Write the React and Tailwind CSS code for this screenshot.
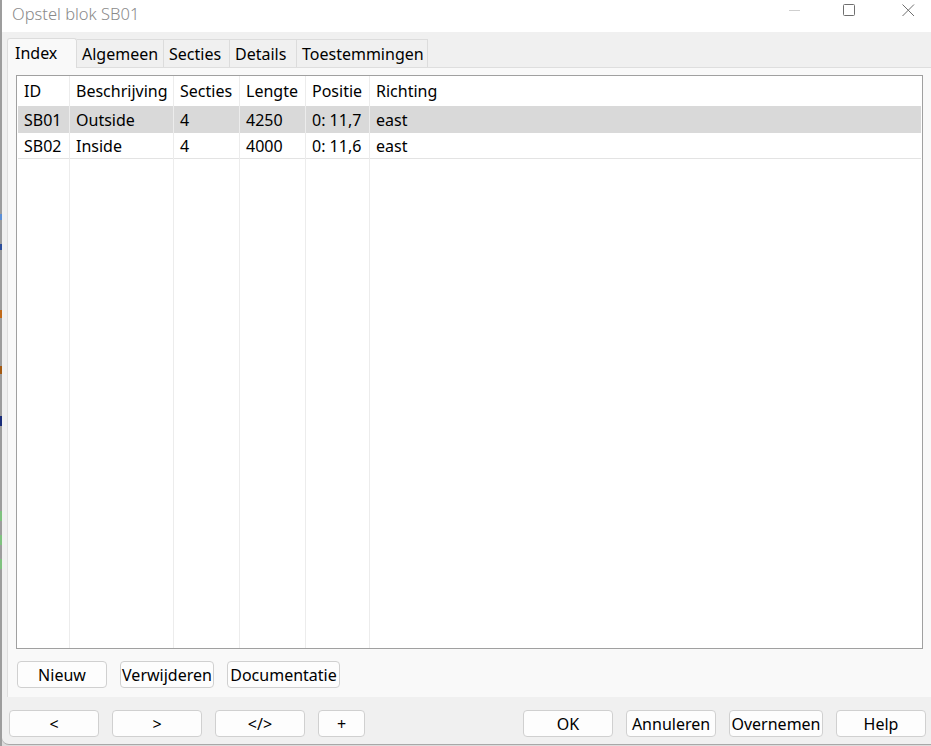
import React from "react";

const font = { fontFamily: '"Noto Sans", "Open Sans", sans-serif' };

const columns = [
  { key: "id", label: "ID", w: "w-[52px]" },
  { key: "desc", label: "Beschrijving", w: "w-[104px]" },
  { key: "sec", label: "Secties", w: "w-[66px]" },
  { key: "len", label: "Lengte", w: "w-[66px]" },
  { key: "pos", label: "Positie", w: "w-[64px]" },
  { key: "dir", label: "Richting", w: "flex-1" },
];

const rows = [
  { id: "SB01", desc: "Outside", sec: "4", len: "4250", pos: "0: 11,7", dir: "east", sel: true },
  { id: "SB02", desc: "Inside", sec: "4", len: "4000", pos: "0: 11,6", dir: "east", sel: false },
];

function Btn({ w, children }) {
  return (
    <div
      className={`${w} h-[27px] shrink-0 flex items-center justify-center rounded-[4px] border border-[#d0d0d0] bg-[#fdfdfd] text-[16px] text-black whitespace-nowrap`}
    >
      {children}
    </div>
  );
}

function Tab({ w, label, selected }) {
  if (selected) {
    return (
      <div
        className={`${w} h-[30px] shrink-0 flex items-center pl-[7px] pb-[2px] bg-[#f9f9f9] border border-b-0 border-[#dcdcdc] rounded-t-[3px] text-[16px] text-black relative z-10 mb-[-1px]`}
      >
        {label}
      </div>
    );
  }
  return (
    <div
      className={`${w} h-[28px] shrink-0 flex items-center pl-[5px] bg-[#f0f0f0] border border-b-0 border-l-0 border-[#dcdcdc] text-[16px] text-black`}
    >
      {label}
    </div>
  );
}

export default function App() {
  return (
    <div className="w-[931px] h-[746px] overflow-hidden flex bg-[#dcdcdc]" style={font}>
      {/* background window peek */}
      <div className="w-[2px] h-full flex flex-col bg-[#9d9d9d]">
        <div className="h-[214px]" />
        <div className="h-[6px] bg-[#5b8fd6]" />
        <div className="h-[24px]" />
        <div className="h-[6px] bg-[#2b4d9a]" />
        <div className="h-[60px]" />
        <div className="h-[8px] bg-[#c06a1a]" />
        <div className="h-[48px]" />
        <div className="h-[8px] bg-[#a45a12]" />
        <div className="h-[42px]" />
        <div className="h-[10px] bg-[#1a2d7a]" />
        <div className="h-[85px]" />
        <div className="h-[10px] bg-[#7fc27f]" />
        <div className="h-[14px]" />
        <div className="h-[10px] bg-[#7fc27f]" />
        <div className="h-[14px]" />
        <div className="h-[10px] bg-[#7fc27f]" />
      </div>

      {/* window */}
      <div className="flex-1 h-[745px] flex flex-col rounded-bl-[7px] overflow-hidden border-b border-[#a8a8a8] bg-[#f0f0f0]">
        {/* title bar */}
        <div className="h-[32px] shrink-0 bg-white flex items-center relative">
          <div className="pl-[10px] text-[16.5px] text-[#8a8a8a] font-light pb-[4px]">Opstel blok SB01</div>
          <div className="flex-1" />
          <div className="w-[11px] h-[1px] bg-[#cfcfcf] mb-[12px]" />
          <div className="w-[43px]" />
          <svg width="13" height="13" viewBox="0 0 13 13" className="mb-[12px]">
            <rect x="0.5" y="0.5" width="11" height="11" rx="1" fill="none" stroke="#6f6f6f" strokeWidth="1" />
          </svg>
          <div className="w-[46px]" />
          <svg width="13" height="13" viewBox="0 0 13 13" className="mb-[12px] mr-[16px]">
            <path d="M0.5 0.5 L12 12 M12 0.5 L0.5 12" stroke="#6f6f6f" strokeWidth="1" fill="none" />
          </svg>
        </div>

        {/* body */}
        <div className="flex-1 flex flex-col pt-[5px]">
          {/* tabs */}
          <div className="flex items-end pl-[5px] h-[30px]">
            <Tab w="w-[70px]" label="Index" selected />
            <Tab w="w-[87px]" label="Algemeen" />
            <Tab w="w-[66px]" label="Secties" />
            <Tab w="w-[67px]" label="Details" />
            <Tab w="w-[131px]" label="Toestemmingen" />
          </div>

          {/* tab page */}
          <div className="ml-[5px] h-[630px] flex flex-col bg-[#f9f9f9] border-l border-t border-[#dedede] pl-[8px] pr-[8px] pt-[7px]">
            {/* list */}
            <div className="h-[574px] border border-[#a0a0a0] bg-white flex px-[1px]">
              {columns.map((c, ci) => (
                <div
                  key={c.key}
                  className={`${c.w} flex flex-col ${ci < columns.length - 1 ? "border-r border-[#ececec]" : ""}`}
                >
                  <div className="h-[30px] flex items-center pl-[6px] text-[16px] text-black whitespace-nowrap">
                    {c.label}
                  </div>
                  {rows.map((r) => (
                    <div
                      key={r.id}
                      className={`flex items-center pl-[6px] text-[16px] text-black whitespace-nowrap ${
                        r.sel ? "h-[27px] bg-[#d9d9d9]" : "h-[26px] border-b border-[#e3e3e3]"
                      }`}
                    >
                      {r[c.key]}
                    </div>
                  ))}
                </div>
              ))}
            </div>

            {/* list buttons */}
            <div className="flex gap-[13px] pt-[12px] pl-[1px]">
              <Btn w="w-[90px]">Nieuw</Btn>
              <Btn w="w-[94px]">Verwijderen</Btn>
              <Btn w="w-[113px]">Documentatie</Btn>
            </div>
          </div>

          {/* bottom buttons */}
          <div className="flex items-center pt-[13px] pl-[7px] pr-[5px]">
            <div className="flex gap-[13px]">
              <Btn w="w-[90px]">&lt;</Btn>
              <Btn w="w-[90px]">&gt;</Btn>
              <Btn w="w-[90px]">&lt;/&gt;</Btn>
              <Btn w="w-[47px]">+</Btn>
            </div>
            <div className="flex-1" />
            <div className="flex gap-[13px]">
              <Btn w="w-[90px]">OK</Btn>
              <Btn w="w-[90px]">Annuleren</Btn>
              <Btn w="w-[94px]">Overnemen</Btn>
              <Btn w="w-[90px]">Help</Btn>
            </div>
          </div>
        </div>
      </div>
    </div>
  );
}
